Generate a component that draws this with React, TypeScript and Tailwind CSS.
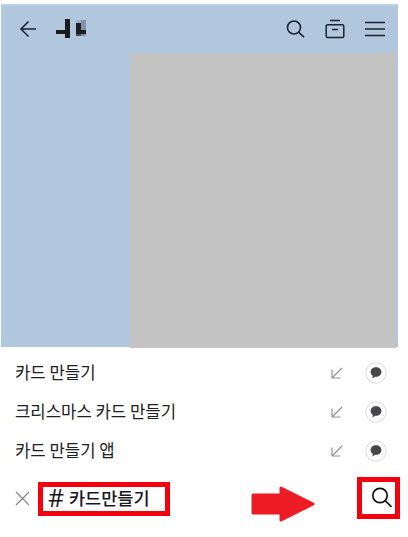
import { ReactNode } from 'react';

const suggestions = ['카드 만들기', '크리스마스 카드 만들기', '카드 만들기 앱'];

type IconProps = {
  width: number;
  height: number;
  className?: string;
  children: ReactNode;
};

function Icon({ width, height, className, children }: IconProps) {
  return (
    <svg
      width={width}
      height={height}
      viewBox={`0 0 ${width} ${height}`}
      fill="none"
      stroke="currentColor"
      className={`shrink-0 ${className ?? ''}`}
    >
      {children}
    </svg>
  );
}

function Header() {
  return (
    <header className="flex h-[49px] items-center pl-[18px] pr-[13px] text-[#18222d]">
      <Icon width={18} height={18} className="mr-[18px]">
        <path d="M17 9H2M9.5 1.5 2 9l7.5 7.5" strokeWidth="1.5" />
      </Icon>
      <Icon width={34} height={22}>
        <g stroke="none">
          <path d="M1 12h9V1h5v19h-5v-4H1z" fill="#191a1e" />
          <path d="M21 2h10v16H21z" fill="#8193ab" />
          <path d="M21 2h5v4h-5z" fill="#a0b2ca" />
          <path d="M21 5h5v7h5v4H21z" fill="#211c1d" />
          <path d="M21 16h5v2h-5z" fill="#454950" />
        </g>
      </Icon>
      <div className="ml-auto flex items-center gap-5">
        <Icon width={20} height={20}>
          <circle cx="9" cy="8.5" r="6.5" strokeWidth="1.6" />
          <path d="m13.5 13 5.5 5.2" strokeWidth="1.6" />
        </Icon>
        <Icon width={20} height={20}>
          <path d="M5 1.5h10M7 10.5h6" strokeWidth="1.4" />
          <rect x="1.2" y="5.7" width="17.6" height="12.8" rx="1.5" strokeWidth="1.5" />
        </Icon>
        <Icon width={20} height={20}>
          <path d="M0 3.5h20M0 10h20M0 16.5h20" strokeWidth="1.6" />
        </Icon>
      </div>
    </header>
  );
}

function SuggestionRow({ label }: { label: string }) {
  return (
    <li className="flex h-[39px] items-center pl-[15px] pr-[21px]">
      <span className="flex-1 pb-0.5 text-[16.7px] leading-6 text-[#202020]">{label}</span>
      <Icon width={12} height={12} className="mr-[22px] text-[#929292]">
        <path d="M11 1 1.5 10.5M1 2.5V11h8.5" strokeWidth="1.2" />
      </Icon>
      <Icon width={22} height={22} className="text-[#dcd8e0]">
        <circle cx="11" cy="11" r="10.2" strokeWidth="1" fill="#fff" />
        <path
          d="M11 5.2c-3.1 0-5.4 2-5.4 4.7 0 1.7.9 3.1 2.3 3.9l-.6 2.8 3-1.8h.7c3.1 0 5.4-2.100 5.400-4.900S14.100 5.200 11 5.200z"
          fill="#47474b"
          stroke="none"
        />
      </Icon>
    </li>
  );
}

function SearchBar() {
  return (
    <div className="flex h-[48px] items-start pl-[15px] pt-[7px]">
      <Icon width={15} height={15} className="mr-2 mt-[14px] text-[#858585]">
        <path d="m1 1 13 13M14 1 1 14" strokeWidth="1.2" />
      </Icon>
      <div className="mt-[5px] flex h-[34px] w-[132px] items-center border-[5px] border-[#f6000d] pb-0.5 pl-[5px] text-[#16181d]">
        <span className="w-[21px] pb-0.5 text-[25px] leading-6 font-['Open_Sans',sans-serif]">#</span>
        <span className="whitespace-nowrap text-[17.5px] font-medium leading-6">카드만들기</span>
      </div>
      <Icon width={66} height={38} className="ml-[80px] mt-2 text-[#ed1c24]">
        <path
          d="M3 10h28V3l32 16-32 16v-7H3z"
          fill="currentColor"
          strokeWidth="3"
          strokeLinejoin="round"
        />
      </Icon>
      <div className="ml-[41px] flex h-[42px] w-[43px] items-center justify-center border-[5px] border-[#f6000d] pl-[7px] text-[#111]">
        <Icon width={22} height={22}>
          <circle cx="9" cy="8.5" r="7.2" strokeWidth="1.7" />
          <path d="m14 13.5 6.500 6.300" strokeWidth="1.7" />
        </Icon>
      </div>
    </div>
  );
}

export default function App() {
  return (
    <main className="h-[537px] w-[408px] overflow-hidden bg-white pt-1 font-['Noto_Sans_CJK_KR',sans-serif]">
      <section className="ml-px h-[343px] w-[397px] border-t-2 border-[#b9d3e6] bg-[#b1c7de]">
        <div className="-mt-0.5">
          <Header />
        </div>
        <div className="ml-[129px] h-[295px] w-[266px] bg-[#c3c3c4]" />
      </section>
      <ul className="mt-[6px]">
        {suggestions.map((label) => (
          <SuggestionRow key={label} label={label} />
        ))}
      </ul>
      <SearchBar />
    </main>
  );
}
